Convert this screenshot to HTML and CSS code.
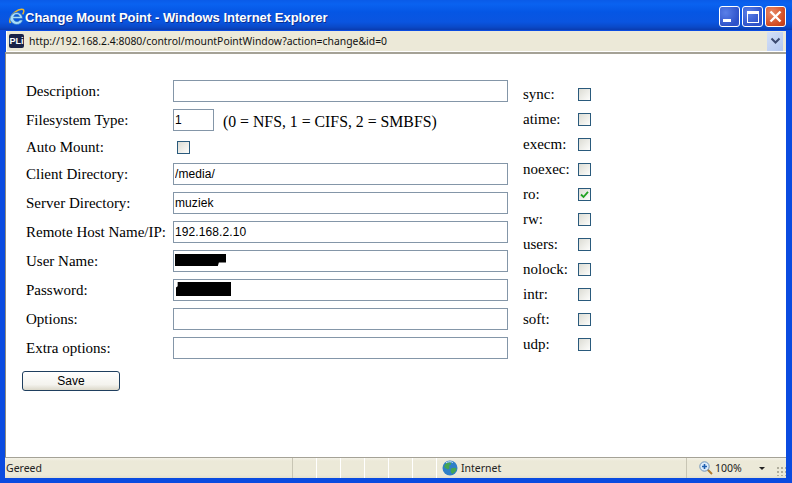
FILE: index.html
```html
<!DOCTYPE html>
<html>
<head>
<meta charset="utf-8">
<title>Change Mount Point - Windows Internet Explorer</title>
<link rel="stylesheet" href="styles.css">
</head>
<body>
<div class="window">
  <header class="titlebar">
    <svg class="ie-logo" width="18" height="18" viewBox="0 0 18 18">
      <path d="M3.500 15C1.500 12.500 4 7 8 4c3-2.300 6-3.300 8-2.500 1.300.6 1 2.600-.3 4.800" fill="none" stroke="#e8b830" stroke-width="1.500"/>
      <path d="M3 11.500C3 7.500 6 4.500 9.500 4.500S15.500 7 15.500 10.500H6.500c.3 2 1.700 3 3.300 3 1.300 0 2.300-.5 3-1.500h3C15 14.700 12.700 16.500 9.700 16.500 7.700 16.500 6 15.500 5 14.500 3.800 13.500 3 12.500 3 11.500ZM6.700 8.500h5.800C12.200 7 11 6.500 9.600 6.500S7.200 7 6.700 8.500Z" fill="#a8dcf8" stroke="#2a6fc0" stroke-width=".7"/>
    </svg>
    <span class="title">Change Mount Point - Windows Internet Explorer</span>
    <div class="controls">
      <span class="ctl ctl-blue"><i class="min-glyph"></i></span>
      <span class="ctl ctl-blue"><i class="max-glyph"></i></span>
      <span class="ctl ctl-red">
        <svg width="15" height="15" viewBox="0 0 15 15"><path d="M2.500 2.500l10 10M12.500 2.500l-10 10" stroke="#fff" stroke-width="2.400"/></svg>
      </span>
    </div>
  </header>
  <div class="addressbar">
    <span class="favicon">PLi</span>
    <span class="url">http://192.168.2.4:8080/control/mountPointWindow?action=change&amp;id=0</span>
    <span class="dropdown">
      <svg width="11" height="8" viewBox="0 0 11 8"><path d="M1.500 1.500l4 4 4-4" fill="none" stroke="#3c4a70" stroke-width="2"/></svg>
    </span>
  </div>
  <main class="content">
    <form class="form">
      <div class="columns">
        <div class="fields">
          <label class="lbl">Description:</label>
          <input class="txt" type="text">
          <label class="lbl">Filesystem Type:</label>
          <div class="inline">
            <input class="txt short" type="text" value="1">
            <span class="hint">(0 = NFS, 1 = CIFS, 2 = SMBFS)</span>
          </div>
          <label class="lbl">Auto Mount:</label>
          <div class="check-cell"><span class="box"></span></div>
          <label class="lbl">Client Directory:</label>
          <input class="txt" type="text" value="/media/">
          <label class="lbl">Server Directory:</label>
          <input class="txt" type="text" value="muziek">
          <label class="lbl">Remote Host Name/IP:</label>
          <input class="txt" type="text" value="192.168.2.10">
          <label class="lbl">User Name:</label>
          <div class="redacted-field"><input class="txt" type="text"><span class="blot blot-user"></span></div>
          <label class="lbl">Password:</label>
          <div class="redacted-field"><input class="txt" type="text"><span class="blot blot-pass"></span></div>
          <label class="lbl">Options:</label>
          <input class="txt" type="text">
          <label class="lbl">Extra options:</label>
          <input class="txt" type="text">
        </div>
        <div class="flags">
          <label class="flag">sync:</label><span class="box"></span>
          <label class="flag">atime:</label><span class="box"></span>
          <label class="flag">execm:</label><span class="box"></span>
          <label class="flag">noexec:</label><span class="box"></span>
          <label class="flag">ro:</label>
          <span class="box"><svg width="11" height="11" viewBox="0 0 11 11"><path d="M2 5.500l2.500 2.500L9 2.800" fill="none" stroke="#21a121" stroke-width="1.800"/></svg></span>
          <label class="flag">rw:</label><span class="box"></span>
          <label class="flag">users:</label><span class="box"></span>
          <label class="flag">nolock:</label><span class="box"></span>
          <label class="flag">intr:</label><span class="box"></span>
          <label class="flag">soft:</label><span class="box"></span>
          <label class="flag">udp:</label><span class="box"></span>
        </div>
      </div>
      <button class="save" type="button">Save</button>
    </form>
  </main>
  <footer class="statusbar">
    <span class="cell cell-status">Gereed</span>
    <span class="cell cell-small"></span>
    <span class="cell cell-small"></span>
    <span class="cell cell-small"></span>
    <span class="cell cell-small"></span>
    <span class="cell cell-mid"></span>
    <span class="cell cell-small"></span>
    <span class="cell cell-zone">
      <svg width="16" height="16" viewBox="0 0 16 16">
        <circle cx="8" cy="8" r="7.500" fill="#2f7fc8"/>
        <path d="M3 4.500c2-2 5-2.500 6-1.500 .5 1.500-1 2-2 3 1 1.500 .5 3-1 3.500C4.500 9 3 7.500 2 7ZM9 8.500c2-1 4.500-1 5.500 0 0 2.500-2 4.500-4 5.500-1.500-1-2.500-3-1.500-5.500Z" fill="#45a552"/>
        <path d="M4 2.800C6 1.500 9 1.300 11 2.500" fill="none" stroke="#cfe6f7" stroke-width="1"/>
      </svg>
      <span>Internet</span>
    </span>
    <span class="cell cell-zoom">
      <svg width="14" height="14" viewBox="0 0 14 14">
        <path d="M8.500 8.500l4.500 4.500" stroke="#b07a30" stroke-width="2"/>
        <circle cx="5.500" cy="5.500" r="4.700" fill="#dcebfa" stroke="#6f92b8"/>
        <path d="M5.500 3v5M3 5.500h5" stroke="#1f5fb0" stroke-width="1.600"/>
      </svg>
      <span>100%</span>
      <i class="zoom-caret"></i>
    </span>
    <span class="grip"></span>
  </footer>
</div>
</body>
</html>
```

FILE: styles.css
```css
* { box-sizing: border-box; }
html, body { margin: 0; padding: 0; }
body { width: 792px; height: 483px; overflow: hidden; background: #0a3fd0; }

.window {
  width: 792px;
  height: 483px;
  display: flex;
  flex-direction: column;
  background: #0a4be0;
  padding: 0 0 5px 0;
}

.titlebar {
  height: 30px;
  flex: none;
  display: flex;
  align-items: center;
  padding: 0 6px 0 7px;
  background: linear-gradient(to bottom, #0a5be8 0, #0a62f0 4px, #0556e4 12px, #0a55e0 22px, #0a49c8 27px, #0a3cb0 30px);
}
.ie-logo { flex: none; margin-top: 3px; }
.title {
  font: bold 13px "Liberation Sans", sans-serif;
  color: #fff;
  text-shadow: 1px 1px 0 #0a2f90;
  white-space: nowrap;
  margin-top: 4px;
}
.controls { margin-left: auto; display: flex; gap: 2px; margin-top: 3px; }
.ctl {
  width: 21px;
  height: 21px;
  border: 1px solid #fff;
  border-radius: 3px;
  display: flex;
  align-items: center;
  justify-content: center;
}
.ctl-blue { background: radial-gradient(circle at 30% 30%, #5a80e8, #2c50c8 75%, #3458d0); }
.ctl-red { background: radial-gradient(circle at 30% 30%, #e88a68, #d24a20 70%, #b83a18); }
.min-glyph { width: 8px; height: 3px; background: #fff; margin: 8px 5px 0 0; }
.max-glyph { width: 12px; height: 12px; border: 1px solid #fff; border-top-width: 3px; }

.addressbar {
  flex: none;
  height: 21px;
  margin: 1px 6px 0 6px;
  display: flex;
  align-items: center;
  background: #ece9d8;
  border-left: 1px solid #fff;
  padding-left: 2px;
  border-bottom: 1px solid #fff;
}
.favicon {
  width: 15px;
  height: 14px;
  background: #1a2348;
  color: #fff;
  border-radius: 2px;
  font: bold 9px/14px "Liberation Sans", sans-serif;
  text-align: center;
  flex: none;
}
.url {
  margin-left: 5px;
  font: 10.4px "Noto Sans", sans-serif;
  color: #111;
  white-space: nowrap;
}
.dropdown {
  margin-left: auto;
  width: 16px;
  height: 19px;
  background: linear-gradient(135deg, #d4e0f8, #b4c8f0);
  display: flex;
  align-items: center;
  justify-content: center;
  margin-right: 3px;
}

.content {
  flex: 1;
  min-height: 0;
  margin: 0 6px 0 5px;
  background: #fff;
  border-top: 2px solid #a5a296;
  border-left: 1px solid #8c8a80;
  padding: 26px 0 0 16px;
  font-family: "Liberation Serif", serif;
  color: #000;
  font-size: 15px;
}

.columns { display: flex; }
.fields {
  display: grid;
  grid-template-columns: 147px 335px;
  grid-template-rows: 22px 22px 18px repeat(7, 22px);
  row-gap: 7px;
  align-items: center;
  margin-left: 4px;
}
.lbl { white-space: nowrap; margin-top: 1px; }
.txt {
  width: 335px;
  height: 22px;
  border: 1px solid #8496a8;
  padding: 0 1px;
  font: 12px "Liberation Sans", sans-serif;
  letter-spacing: 0.1px;
  color: #000;
  background: #fff;
  outline: none;
  display: block;
}
.txt.short { width: 41px; }
.inline { display: flex; align-items: center; }
.hint { margin-left: 9px; font-size: 15.8px; margin-top: 3px; white-space: nowrap; }
.check-cell { display: flex; padding-left: 4px; }
.box {
  width: 13px;
  height: 13px;
  border: 1px solid #2a5a7c;
  background: linear-gradient(135deg, #dcdcd4, #fdfdfb);
  display: flex;
  align-items: center;
  justify-content: center;
  flex: none;
}
.redacted-field { position: relative; }
.blot { position: absolute; background: #000; }
.blot-user { left: 2px; top: 4px; width: 51px; height: 12px; clip-path: polygon(0 0, 100% 0, 100% 70%, 86% 70%, 84% 100%, 0 100%); }
.blot-pass { left: 3px; top: 3px; width: 55px; height: 14px; clip-path: polygon(3% 0, 100% 0, 100% 100%, 0 100%, 0 40%, 3% 30%); }

.flags {
  display: grid;
  grid-template-columns: 55px 13px;
  grid-auto-rows: 25px;
  align-items: center;
  margin-left: 15px;
  margin-top: 2px;
}
.flag { white-space: nowrap; }

.save {
  display: block;
  width: 98px;
  height: 20px;
  margin-top: 12px;
  padding: 0;
  border: 1px solid #1f3f5f;
  border-radius: 3px;
  background: linear-gradient(to bottom, #fff 0, #f4f3ee 70%, #dcd8ca 100%);
  font: 12px "Liberation Sans", sans-serif;
  color: #000;
}

.statusbar {
  flex: none;
  height: 21px;
  margin: 0 6px 0 5px;
  display: flex;
  align-items: center;
  background: linear-gradient(to bottom, #f4f2e8 0, #ece9d8 3px, #ece9d8 17px, #e2dfcf 100%);
  border-top: 1px solid #a5a296;
  font: 10.5px "Noto Sans", sans-serif;
  color: #222;
}
.cell {
  height: 100%;
  display: flex;
  align-items: center;
  border-right: 1px solid #fff;
  flex: none;
}
.cell-status { width: 288px; padding-left: 1px; border-right: 1px solid #c8c5b4; }
.cell-small { width: 24px; }
.cell-mid { width: 24px; }
.cell-zone { width: 250px; padding-left: 5px; gap: 3px; border-right: 1px solid #c8c5b4; }
.cell-zoom { padding-left: 12px; gap: 2px; border: 0; width: 78px; }
.zoom-caret {
  width: 0;
  height: 0;
  border: 3px solid transparent;
  border-top: 3px solid #222;
  border-bottom: 0;
  margin-left: 15px;
}
.grip {
  width: 10px;
  height: 10px;
  margin: 6px 0 0 auto;
  background: radial-gradient(circle, #b0ad9c 1px, transparent 1.500px) 0 0 / 4px 4px;
}
```
